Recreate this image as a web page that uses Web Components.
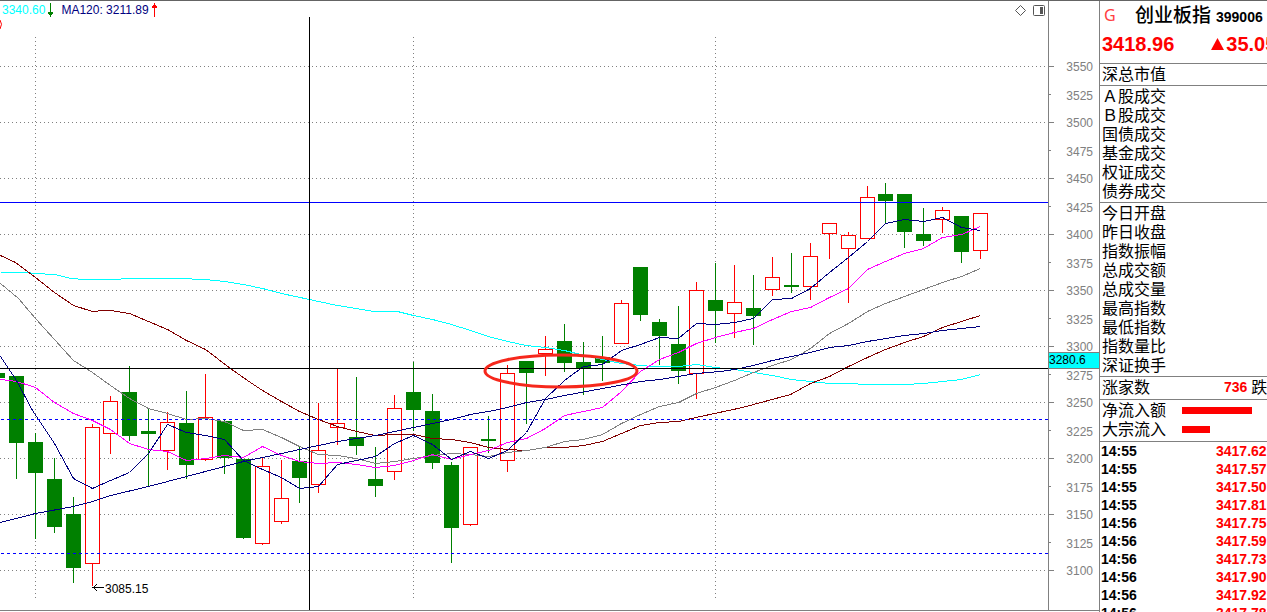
<!DOCTYPE html>
<html lang="zh-CN">
<head>
<meta charset="utf-8">
<title>创业板指 399006</title>
<style>
  body { margin: 0; height: 100vh; overflow: hidden; background: #fff; color: #000;
    font: 12px/16px "Liberation Sans", "Noto Sans CJK SC", sans-serif; }
</style>
</head>
<body>
<stock-screen></stock-screen>
<script>
const define = (name, html, setup) => {
  const template = document.createElement('template');
  template.innerHTML = html;
  customElements.define(name, class extends HTMLElement {
    constructor() {
      super();
      this.attachShadow({ mode: 'open' }).append(template.content.cloneNode(true));
    }
    connectedCallback() { if (setup) setup(this, this.shadowRoot); }
  });
};

/* Candles: centre x, rising (1) or falling (0), high, body top, body bottom, low */
const candles = [
  [-3,0,373,373,378,378],[16,0,376,376,443,479],[35,0,433,442,473,539],[54,0,458,479,527,533],
  [73,0,497,514,568,583],[92,1,424,427,564,586],[110,1,396,401,434,454],[129,0,366,392,436,441],
  [148,0,409,431,434,486],[167,1,412,422,451,470],[186,0,391,423,465,479],[205,1,374,417,460,461],
  [224,0,420,421,458,474],[243,0,459,459,538,539],[262,1,458,466,544,545],[281,1,460,498,522,524],
  [299,0,446,461,478,503],[318,1,403,450,485,493],[337,1,369,423,428,445],[356,0,377,437,446,455],
  [375,0,447,479,486,497],[394,1,395,408,472,480],[413,0,362,392,410,431],[432,0,394,411,463,469],
  [451,0,462,465,528,563],[470,1,447,447,525,526],[488,0,416,439,441,453],[507,1,365,373,461,472],
  [526,0,361,361,373,424],[545,1,336,349,354,376],[564,0,324,341,363,372],[583,0,342,362,369,395],
  [602,0,336,357,363,381],[621,1,300,303,344,344],[640,0,267,267,315,321],[659,0,319,322,336,365],
  [678,0,306,344,371,384],[696,1,282,290,374,399],[715,0,263,300,311,343],[734,1,265,302,314,338],
  [753,0,275,308,316,345],[772,1,257,277,290,296],[791,0,253,285,287,293],[810,1,243,256,287,300],
  [829,1,223,223,234,259],[848,1,232,235,249,303],[867,1,186,197,239,239],[885,0,183,194,201,223],
  [904,0,194,194,232,248],[923,0,208,234,241,246],[942,1,207,210,220,233],[961,0,216,216,252,263],
  [980,1,213,213,251,259]];

const averages = {
  cyan: '0,272 26,272 35,273 54,274 71,278 83,279 115,279 126,278 177,278 205,279 224,281 243,284 262,288 281,293 309,299 318,301 337,305 356,308 373,311 397,311 413,315 432,319 451,324 470,330 488,336 507,341 526,345 545,347 564,350 580,354 602,359 621,363 640,365 653,366 678,366 696,364 715,367 734,369 753,372 772,375 791,379 810,381 829,383 848,383 867,384 904,384 923,383 942,381 961,379 980,374',
  maroon: '0,255 15,262 35,277 54,292 73,305 92,311 103,310 110,310 129,313 148,321 167,329 186,340 205,349 230,368 247,380 262,390 281,401 299,411 318,419 337,426 356,431 375,435 394,434 413,434 432,438 451,439 470,442 488,447 507,449 526,450 545,447 564,447 583,445 602,441 621,433 640,425 659,422 678,421 700,416 742,407 790,394 810,383 829,376 848,366 867,357 885,349 904,342 923,336 942,327 961,321 980,315',
  gray: '0,283 18,298 35,318 54,339 73,360 92,372 110,385 129,398 148,408 167,413 186,419 205,418 224,421 243,430 262,429 281,437 299,446 318,454 337,455 356,458 375,463 394,461 413,458 432,455 451,453 470,454 488,456 507,452 526,450 545,447 564,441 583,439 602,434 621,423 640,414 659,406 678,402 696,393 715,387 734,380 753,372 772,365 791,359 810,348 829,333 848,323 867,311 885,303 904,296 923,289 942,282 961,276 980,268',
  magenta: '0,379 16,381 35,387 54,402 73,413 92,420 110,429 129,443 148,449 167,451 186,460 205,458 224,455 243,457 262,446 281,455 299,461 318,463 337,462 356,464 375,467 394,465 413,460 432,454 451,459 470,454 488,450 507,442 526,438 545,428 564,415 583,411 602,407 621,391 640,371 659,359 678,352 696,343 715,337 734,332 753,328 772,319 791,311 810,307 829,297 848,288 867,269 885,261 904,253 923,248 942,237 961,234 980,226',
  navy: '0,356 16,380 32,410 54,443 73,478 92,488 110,480 129,472 148,453 167,424 186,432 205,435 224,439 243,460 262,469 281,477 299,488 318,486 337,464 356,460 375,456 394,443 413,435 432,444 451,459 470,451 488,458 507,450 526,432 545,398 564,380 583,366 602,364 621,350 640,344 659,337 678,338 696,323 715,324 734,322 753,318 772,299 791,298 810,288 829,272 848,257 867,241 885,223 904,219 923,221 942,217 961,227 980,230',
  '#000080': '0,522 35,513 73,506 92,501 110,495 148,486 186,476 243,461 262,457 281,453 299,449 318,445 337,441 375,435 394,431 413,427 432,423 451,419 470,414 488,411 507,407 526,402 545,399 564,395 602,388 640,381 659,379 678,376 696,373 720,371 734,369 753,365 772,360 791,356 810,352 829,347 848,345 867,341 904,335 923,333 942,330 980,326'
};

define('stock-screen', `
  <style>
    :host { display: flex; height: 100%; box-sizing: border-box; border-top: 1px solid #646464; }
    price-chart { flex: 1; min-width: 0; margin-bottom: 1px; }
    price-axis { flex: 0 0 50px; margin-bottom: 1px; }
    quote-panel { flex: 0 0 168px; }
  </style>
  <price-chart></price-chart>
  <price-axis></price-axis>
  <quote-panel></quote-panel>`);

define('chart-legend', `
  <style>
    :host { display: flex; align-items: flex-start; line-height: 18px; padding: 0 3px 0 2px; }
    .ma60 { color: cyan; }
    .ma120 { color: navy; margin-left: 8px; }
    svg { margin-top: 2px; width: 5px; height: 14px; margin-left: 3px; }
    .tools { margin-left: auto; width: 31px; height: 12px; margin-top: 4px; }
  </style>
  <span class="ma60">3340.60</span>
  <svg viewBox="0 0 5 14"><path d="M2 0h1v9h2v2h-1v1h-1v2h-1v-2h-1v-1h-1v-2h2z" fill="green"/></svg>
  <span class="ma120">MA120: 3211.89</span>
  <svg viewBox="0 0 5 14"><path d="M2 14h1v-9h2v-2h-1v-1h-1v-2h-1v2h-1v1h-1v2h2z" fill="red"/></svg>
  <svg class="tools" viewBox="0 0 31 12"><path d="M6.500 .5l5 5-5 5-5-5z" fill="none" stroke="#555"/><rect x="19.500" y=".5" width="11" height="10" rx="1" fill="none" stroke="#555"/><path d="M26 2h3v7h-3z" fill="#555"/></svg>`);

define('price-chart', `
  <style>
    :host { display: grid; overflow: hidden; border-bottom: 1px solid #808080; }
    chart-legend, .plot { grid-area: 1 / 1; }
    chart-legend { align-self: start; }
    .plot { width: 100%; height: 100%; min-height: 0; }
    text { font: 12px "Liberation Sans", sans-serif; }
  </style>
  <svg class="plot" role="img" aria-label="创业板指 K线图"><g transform="translate(0 -1)"></g></svg>
  <chart-legend></chart-legend>`,
  (host, root) => {
    const rule = (y, attrs) => `<line x1="0" x2="100%" y1="${y}.5" y2="${y}.5" ${attrs}/>`;
    let s = '<g shape-rendering="crispEdges" fill="none">';
    for (let y = 66; y <= 570; y += 56) s += rule(y, 'stroke="#808080" stroke-dasharray="1 3"');
    for (const x of [35, 413, 715]) s += `<line x1="${x}.5" x2="${x}.5" y1="37" y2="599" stroke="#808080" stroke-dasharray="1 3"/>`;
    for (const [x, up, hi, top, bot, lo] of candles) {
      s += `<path d="M${x + .5} ${hi}V${lo}" stroke="${up ? 'red' : 'green'}"/>`;
      s += up
        ? `<rect x="${x - 6.5}" y="${top + .5}" width="14" height="${bot - top - 1}" fill="#fff" stroke="red"/>`
        : `<rect x="${x - 7}" y="${top}" width="15" height="${bot - top}" fill="green"/>`;
    }
    s += '<g transform="translate(.5 .5)">';
    for (const [color, points] of Object.entries(averages)) s += `<polyline points="${points}" stroke="${color}"/>`;
    s += '</g>';
    s += rule(419, 'stroke="#00f" stroke-dasharray="3 3" stroke-dashoffset="-1"');
    s += rule(553, 'stroke="#00f" stroke-dasharray="3 3" stroke-dashoffset="-1"');
    s += rule(202, 'stroke="#00f"') + rule(368, 'stroke="#000"');
    s += '<path d="M309.500 17V611M92 587.500H104M96.500 584v1M95.500 585v1M94.500 586v1M94.500 588v1M95.500 589v1M96.500 590v1" stroke="#000"/></g>';
    s += '<text x="105" y="593">3085.15</text>';
    s += '<path d="M0 20Q3 24 0 29" fill="none" stroke="red"/>';
    s += '<ellipse cx="561" cy="371" rx="76" ry="16" fill="none" stroke="#f6281c" stroke-width="3"/>';
    root.querySelector('g').innerHTML = s;
  });

define('price-axis', `
  <style>
    :host { display: grid; position: relative; overflow: hidden; color: #808080;
      border-left: 1px solid #808080; border-bottom: 1px solid #808080; }
    ol { list-style: none; margin: 0; padding: 51px 0 0; }
    li { display: flex; align-items: center; height: 28px; }
    li::before { content: ""; width: 5px; height: 1px; background: #808080; }
    li:nth-child(even)::before { width: 2px; }
    li span { margin-left: auto; padding: 1px 6px 0 0; }
    li:nth-child(even) span { padding-top: 3px; }
    output { position: absolute; top: 351px; left: 0; right: 0; height: 15px; line-height: 14px;
      background: cyan; color: #000; border: 1px solid #808080; border-width: 1px 0; }
  </style>
  <ol></ol><output>3280.6</output>`,
  (host, root) => {
    let s = '';
    for (let p = 3550; p >= 3100; p -= 25) s += `<li><span>${p}</span></li>`;
    root.querySelector('ol').innerHTML = s;
  });

define('quote-section', `
  <style>
    :host { display: block; border-top: 1px solid #808080; padding: 1px 0 1px 2px;
      font: 16px/19px "Liberation Sans", "Noto Sans CJK SC", sans-serif; }
    :host(.flow) { padding-bottom: 2px; }
  </style>
  <slot></slot>`);

define('quote-row', `
  <style>
    :host { display: flex; height: 19px; align-items: center; white-space: nowrap; }
    .label { width: 80px; flex: none; }
  </style>
  <span class="label"><slot></slot></span><slot name="value"></slot>`);

define('tick-table', `
  <style>
    :host { display: block; border-top: 1px solid #808080; }
    table { border-collapse: collapse; font: bold 14px/18px "Liberation Sans", sans-serif; }
    td { padding: 0 0 0 1px; width: 116px; }
    td + td { padding: 0; width: 51px; color: red; }
  </style>
  <table><tbody></tbody></table>`,
  (host, root) => {
    const ticks = [['14:55', '3417.62'], ['14:55', '3417.57'], ['14:55', '3417.50'], ['14:55', '3417.81'],
      ['14:56', '3417.75'], ['14:56', '3417.59'], ['14:56', '3417.73'], ['14:56', '3417.90'],
      ['14:56', '3417.92'], ['14:56', '3417.78']];
    root.querySelector('tbody').innerHTML = ticks.map(([t, p]) => `<tr><td>${t}</td><td>${p}</td></tr>`).join('');
  });

define('quote-panel', `
  <style>
    :host { display: block; box-sizing: border-box; overflow: hidden; border-left: 1px solid #808080; }
    header { height: 62px; white-space: nowrap; }
    .name { display: flex; align-items: center; height: 29px; padding-left: 4px; }
    .flag { color: #ff4040; width: 31px; font: 16px/20px "Noto Sans", sans-serif; padding-bottom: 2px; }
    h1 { margin: 0; font: 500 19px/28px "Liberation Sans", "Noto Sans CJK SC", sans-serif; }
    .code { font: bold 14px/20px "Liberation Sans", sans-serif; padding: 3px 0 0 5px; }
    .price { display: flex; align-items: center; height: 28px; padding-left: 2px; color: red;
      font: bold 20px/28px "Liberation Sans", sans-serif; }
    .price svg { width: 13px; height: 12px; margin: 0 2px 0 37px; flex: none; }
    b { color: red; font: bold 14px/19px "Liberation Sans", sans-serif; margin: 0 4px 0 42px; }
    .bar { height: 7px; background: red; }
    .net { width: 70px; }
    .block { width: 28px; }
  </style>
  <header>
    <div class="name"><span class="flag">G</span><h1>创业板指</h1><span class="code">399006</span></div>
    <div class="price"><span>3418.96</span><svg viewBox="0 0 13 12"><path d="M6.500 0L13 12H0z" fill="red"/></svg><span>35.05</span></div>
  </header>
  <quote-section><quote-row>深总市值</quote-row></quote-section>
  <quote-section class="turnover"></quote-section>
  <quote-section class="index"></quote-section>
  <quote-section class="flow"><quote-row>涨家数<b slot="value">736</b><span slot="value">跌</span></quote-row></quote-section>
  <quote-section class="flow">
    <quote-row>净流入额<span slot="value" class="bar net"></span></quote-row>
    <quote-row>大宗流入<span slot="value" class="bar block"></span></quote-row>
  </quote-section>
  <tick-table></tick-table>`,
  (host, root) => {
    const rows = names => names.split(' ').map(n => `<quote-row>${n}</quote-row>`).join('');
    root.querySelector('.turnover').innerHTML = rows('Ａ股成交 Ｂ股成交 国债成交 基金成交 权证成交 债券成交');
    root.querySelector('.index').innerHTML = rows('今日开盘 昨日收盘 指数振幅 总成交额 总成交量 最高指数 最低指数 指数量比 深证换手');
  });
</script>
</body>
</html>
